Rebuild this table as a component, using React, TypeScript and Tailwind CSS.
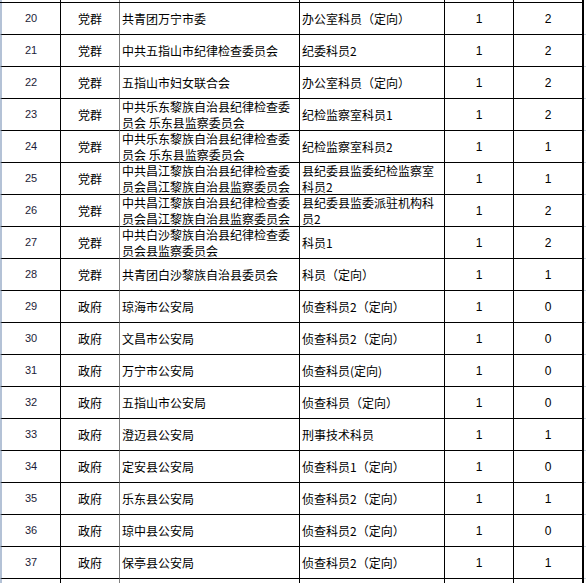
import React from 'react';

type Row = {
  no: number;
  kind: string;
  org: string[];
  post: string[];
  a: string;
  b: string;
};

const rows: Row[] = [
  { no: 20, kind: '党群', org: ['共青团万宁市委'], post: ['办公室科员（定向）'], a: '1', b: '2' },
  { no: 21, kind: '党群', org: ['中共五指山市纪律检查委员会'], post: ['纪委科员2'], a: '1', b: '2' },
  { no: 22, kind: '党群', org: ['五指山市妇女联合会'], post: ['办公室科员（定向）'], a: '1', b: '2' },
  { no: 23, kind: '党群', org: ['中共乐东黎族自治县纪律检查委', '员会 乐东县监察委员会'], post: ['纪检监察室科员1'], a: '1', b: '2' },
  { no: 24, kind: '党群', org: ['中共乐东黎族自治县纪律检查委', '员会 乐东县监察委员会'], post: ['纪检监察室科员2'], a: '1', b: '1' },
  { no: 25, kind: '党群', org: ['中共昌江黎族自治县纪律检查委', '员会昌江黎族自治县监察委员会'], post: ['县纪委县监委纪检监察室', '科员2'], a: '1', b: '1' },
  { no: 26, kind: '党群', org: ['中共昌江黎族自治县纪律检查委', '员会昌江黎族自治县监察委员会'], post: ['县纪委县监委派驻机构科', '员2'], a: '1', b: '2' },
  { no: 27, kind: '党群', org: ['中共白沙黎族自治县纪律检查委', '员会县监察委员会'], post: ['科员1'], a: '1', b: '2' },
  { no: 28, kind: '党群', org: ['共青团白沙黎族自治县委员会'], post: ['科员（定向）'], a: '1', b: '1' },
  { no: 29, kind: '政府', org: ['琼海市公安局'], post: ['侦查科员2（定向）'], a: '1', b: '0' },
  { no: 30, kind: '政府', org: ['文昌市公安局'], post: ['侦查科员2（定向）'], a: '1', b: '0' },
  { no: 31, kind: '政府', org: ['万宁市公安局'], post: ['侦查科员(定向)'], a: '1', b: '0' },
  { no: 32, kind: '政府', org: ['五指山市公安局'], post: ['侦查科员（定向）'], a: '1', b: '0' },
  { no: 33, kind: '政府', org: ['澄迈县公安局'], post: ['刑事技术科员'], a: '1', b: '1' },
  { no: 34, kind: '政府', org: ['定安县公安局'], post: ['侦查科员1（定向）'], a: '1', b: '0' },
  { no: 35, kind: '政府', org: ['乐东县公安局'], post: ['侦查科员2（定向）'], a: '1', b: '1' },
  { no: 36, kind: '政府', org: ['琼中县公安局'], post: ['侦查科员2（定向）'], a: '1', b: '0' },
  { no: 37, kind: '政府', org: ['保亭县公安局'], post: ['侦查科员2（定向）'], a: '1', b: '1' },
];

const cjk = { fontFamily: '"Noto Sans CJK SC", "Noto Sans", sans-serif' };
const num = { fontFamily: '"Liberation Sans", Arial, sans-serif' };

// a strip with only the vertical rules (rows cut off at the top / bottom edge)
function Stub({ h }: { h: string }) {
  return (
    <div className={`flex ${h}`}>
      <div className="w-[61px] border-l-2 border-r border-l-[#b4c2d6] border-r-black" />
      <div className="w-[59px] border-r border-[#808080]" />
      <div className="w-[180px] border-r border-black" />
      <div className="w-[145px] border-r border-black" />
      <div className="w-[69px] border-r border-black" />
      <div className="w-[70px] border-r-2 border-black" />
      <div className="w-[2px]" />
    </div>
  );
}

export default function App() {
  return (
    <div className="w-[586px] h-[583px] overflow-hidden bg-white text-black">
      <Stub h="h-[2px]" />
      <div className="border-t border-black mr-[2px]" />
      {rows.map((r) => (
        <div key={r.no} className="flex h-[32px]">
          <div
            className="w-[61px] flex items-center justify-center border-l-2 border-r border-b border-l-[#b4c2d6] border-r-black border-b-black text-[11px] text-[#1c1c38]"
            style={num}
          >
            {r.no}
          </div>
          <div
            className="w-[59px] flex items-center justify-center border-r border-b border-r-[#808080] border-b-black text-[12px]"
            style={cjk}
          >
            {r.kind}
          </div>
          <div
            className="w-[180px] flex flex-col justify-center pl-[2px] border-r border-b border-black text-[12px] leading-[15.5px] whitespace-nowrap"
            style={cjk}
          >
            {r.org.map((t) => (
              <span key={t}>{t}</span>
            ))}
          </div>
          <div
            className="w-[145px] flex flex-col justify-center pl-[2px] border-r border-b border-black text-[12px] leading-[15.5px] whitespace-nowrap"
            style={cjk}
          >
            {r.post.map((t) => (
              <span key={t}>{t}</span>
            ))}
          </div>
          <div
            className="w-[69px] flex items-center justify-center border-r border-b border-black text-[12px]"
            style={num}
          >
            {r.a}
          </div>
          <div
            className="w-[70px] flex items-center justify-center border-r-2 border-b border-black text-[12px]"
            style={num}
          >
            {r.b}
          </div>
          <div className="w-[2px] border-b border-[#c6d0de]" />
        </div>
      ))}
      <Stub h="h-[10px]" />
    </div>
  );
}
